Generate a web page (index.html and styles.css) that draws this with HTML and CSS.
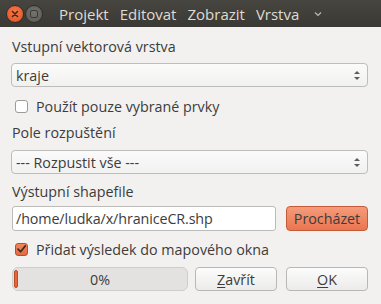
FILE: index.html
```html
<!DOCTYPE html>
<html lang="cs">
<head>
<meta charset="utf-8">
<title>Rozpustit</title>
<link rel="stylesheet" href="styles.css">
</head>
<body>
<div class="window">
  <div class="titlebar">
    <span class="wbtn close"><svg width="10" height="10" viewBox="0 0 10 10"><path d="M2.5 2.5 L7.5 7.5 M7.5 2.5 L2.5 7.5" stroke="#4a2216" stroke-width="1.6" stroke-linecap="round"/></svg></span>
    <span class="wbtn max"><span class="sq"></span></span>
    <nav class="menu">
      <span>Projekt</span>
      <span>Editovat</span>
      <span>Zobrazit</span>
      <span>Vrstva</span>
      <svg class="chev" width="10" height="8" viewBox="0 0 10 8"><path d="M2 2.5 L5 5.5 L8 2.5" fill="none" stroke="#bdb9b1" stroke-width="1.2"/></svg>
    </nav>
  </div>
  <div class="content">
    <div class="label l1">Vstupní vektorová vrstva</div>
    <div class="combo c1"><span>kraje</span><span class="arrows"><i class="up"></i><i class="down"></i></span></div>
    <label class="check r1"><span class="box"></span><span>Použít pouze vybrané prvky</span></label>
    <div class="label l2">Pole rozpuštění</div>
    <div class="combo c2"><span>--- Rozpustit vše ---</span><span class="arrows"><i class="up"></i><i class="down"></i></span></div>
    <div class="label l3">Výstupní shapefile</div>
    <div class="filerow">
      <div class="input">/home/ludka/x/hraniceCR.shp</div>
      <button class="btn primary">Procházet</button>
    </div>
    <label class="check r2"><span class="box on"><svg width="12" height="12" viewBox="0 0 12 12"><path d="M2.2 6.2 L5 9 L10.2 2.6" fill="none" stroke="#3d2a22" stroke-width="1.8" stroke-linecap="round" stroke-linejoin="round"/></svg></span><span>Přidat výsledek do mapového okna</span></label>
    <div class="bottom">
      <div class="progress"><span class="chunk"></span><span class="pct">0%</span></div>
      <button class="btn"><u>Z</u>avřít</button>
      <button class="btn"><u>O</u>K</button>
    </div>
  </div>
</div>
</body>
</html>
```
FILE: styles.css
```css
* { box-sizing: border-box; }
html, body { margin: 0; padding: 0; }
body {
  width: 381px;
  height: 304px;
  background: #f2f1f0;
  font-family: "Open Sans", "DejaVu Sans", sans-serif;
  font-size: 14.3px;
  color: #3c3c3c;
  overflow: hidden;
}
.titlebar {
  height: 27px;
  background: linear-gradient(#46453f, #3a3935);
  display: flex;
  align-items: center;
  padding-left: 6px;
}
.wbtn {
  width: 18px;
  height: 18px;
  border-radius: 50%;
  display: flex;
  align-items: center;
  justify-content: center;
  margin-right: 1px;
}
.wbtn.close {
  background: radial-gradient(circle at 50% 40%, #f47a4c, #e1501f);
  border: 1px solid #2f2e2a;
}
.wbtn.max {
  background: radial-gradient(circle at 50% 40%, #75736d, #5a5853);
  border: 1px solid #2f2e2a;
}
.wbtn .sq {
  width: 8px; height: 8px;
  border: 1.5px solid #3b3a36;
  border-radius: 2px;
}
.menu {
  display: flex;
  align-items: center;
  margin-left: 15px;
  color: #dfdbd2;
  font-size: 15px;
  gap: 11px;
}
.menu .chev { margin-left: 3px; margin-top: 1px; }
.content {
  padding: 0 13px 0 11px;
  display: flex;
  flex-direction: column;
}
.label {
  height: 18px;
  line-height: 18px;
  padding-left: 1px;
}
.l1 { margin-top: 11px; }
.combo {
  height: 24px;
  margin-top: 7px;
  border: 1px solid #bfbdb9;
  border-radius: 4px;
  background: linear-gradient(#fbfbfb, #f1f1f0);
  display: flex;
  align-items: center;
  justify-content: space-between;
  padding: 0 7px 0 4px;
}
.arrows { display: flex; flex-direction: column; gap: 3px; }
.arrows i {
  width: 0; height: 0;
  border-left: 3px solid transparent;
  border-right: 3px solid transparent;
}
.arrows .up { border-bottom: 3px solid #5d5d5d; }
.arrows .down { border-top: 3px solid #5d5d5d; }
.check {
  display: flex;
  align-items: center;
  height: 20px;
  padding-left: 4px;
  gap: 8px;
}
.r1 { margin-top: 9px; }
.r2 { margin-top: 8px; }
.box {
  width: 13px; height: 13px;
  border: 1px solid #9d9b97;
  border-radius: 3px;
  background: #fff;
  display: flex; align-items: center; justify-content: center;
}
.box.on {
  background: linear-gradient(#f0855c, #e46a3f);
  border-color: #b9502b;
}
.l2 { margin-top: 8px; }
.c2 { margin-top: 8px; }
.l3 { margin-top: 9px; }
.filerow {
  display: flex;
  margin-top: 5px;
  height: 25px;
  gap: 10px;
}
.input {
  width: 264px;
  border: 1px solid #bdbbb7;
  border-radius: 3px;
  background: #fff;
  padding: 0 3px;
  display: flex;
  align-items: center;
  margin-left: 1px;
  letter-spacing: -0.1px;
}
.btn {
  font: inherit;
  color: #3c3c3c;
  border: 1px solid #b9b7b3;
  border-radius: 4px;
  background: linear-gradient(#fcfcfc, #ecebea);
  padding: 0;
  flex: 1;
}
.btn u { text-decoration-thickness: 1px; text-underline-offset: 2px; }
.btn.primary {
  background: linear-gradient(#f59b7a, #eb7550);
  border-color: #c45b38;
}
.bottom {
  display: flex;
  margin-top: 8px;
  height: 24px;
  gap: 9px;
}
.progress {
  width: 176px;
  flex: none;
  margin-left: 1px;
  margin-right: -2px;
  position: relative;
  border: 1px solid #cfcdc9;
  border-radius: 6px;
  background: #e3e2e0;
  display: flex; align-items: center; justify-content: center;
}
.chunk {
  position: absolute;
  left: 1px; top: 2px; bottom: 2px;
  width: 4px;
  background: #e9663a;
  border: 1px solid #b94d28;
  border-radius: 2px;
}
```
